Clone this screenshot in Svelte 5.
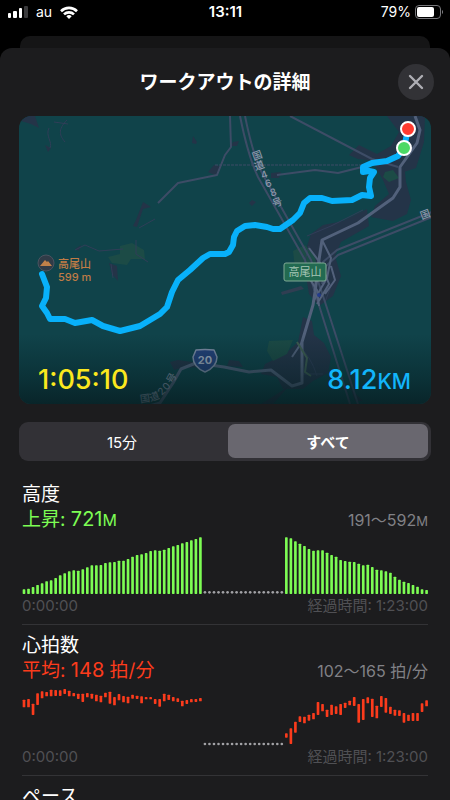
<script>
  let range = $state('all');

  const ranges = [
    { id: '15min', label: '15分' },
    { id: 'all', label: 'すべて' },
  ];

  // chart units: 90 time slots, 1218 x 180
  const STEP = 13.57;
  const slotX = (slot) => 6 + slot * STEP;
  const PAUSE_START = 40;
  const PAUSE_LENGTH = 18;
  const pauseSlots = Array.from({ length: PAUSE_LENGTH }, (_, i) => PAUSE_START + i);

  const climb = [
    178, 176, 171, 165, 160, 154, 151, 144, 136, 130, 124, 121, 122, 118, 112, 106, 106, 105, 99, 97,
    96, 92, 92, 87, 80, 75, 73, 69, 63, 61, 62, 59, 54, 49, 45, 40, 36, 31, 27, 22,
  ];
  const descent = [
    22, 25, 34, 41, 48, 57, 62, 61, 61, 68, 75, 80, 90, 93, 95, 96, 101, 106, 104, 111, 119, 121, 124,
    128, 140, 149, 155, 159, 165, 170, 178, 180,
  ];
  const pulseBefore = [
    [38, 61], [36, 61], [50, 84], [19, 54], [13, 34], [15, 28], [8, 28], [9, 27], [10, 27], [6, 21],
    [11, 28], [18, 28], [20, 36], [20, 45], [18, 31], [20, 35], [23, 43], [26, 46], [17, 31], [14, 50],
    [30, 55], [21, 40], [27, 46], [29, 49], [23, 35], [26, 36], [28, 49], [30, 37], [30, 37], [36, 51],
    [36, 59], [20, 43], [23, 39], [30, 43], [34, 45], [41, 58], [39, 51], [36, 46], [36, 45], [33, 43],
  ];
  const pulseAfter = [
    [139, 152], [124, 171], [104, 137], [88, 105], [89, 109], [83, 101], [78, 97], [45, 84], [51, 73],
    [68, 90], [53, 84], [58, 81], [51, 84], [47, 63], [41, 55], [30, 57], [51, 107], [36, 99], [31, 49],
    [35, 90], [56, 94], [27, 60], [33, 77], [59, 81], [68, 86], [70, 87], [78, 107], [83, 102],
    [78, 102], [78, 102], [49, 75], [40, 58],
  ];

  const place = (before, after) => [
    ...before.map(([top, bottom], i) => ({ x: slotX(i), top, bottom })),
    ...after.map(([top, bottom], i) => ({ x: slotX(PAUSE_START + PAUSE_LENGTH + i), top, bottom })),
  ];
  const fromBase = (tops) => tops.map((top) => [top - 18, 174]);

  // characters of the road names, each with its own centre and tilt
  const roadLetters = [
    ['国', 238, 39, -20], ['道', 240, 49, -20], ['4', 245, 58, -20], ['6', 249, 67, -20],
    ['8', 254, 76, -20], ['号', 258, 86, -20],
    ['国', 406, 98, -20],
    ['国', 126, 282, -8], ['道', 135, 280, -20], ['2', 142, 275, -45], ['0', 147, 270, -50],
    ['号', 152, 262, -60],
  ];

  const sections = [
    {
      id: 'elevation',
      title: '高度',
      label: '上昇:',
      value: '721',
      unit: 'M',
      rate: '',
      extent: '191〜592',
      extentUnit: 'M',
      pauseY: 169,
      bars: place(fromBase(climb), fromBase(descent)),
    },
    {
      id: 'heart',
      title: '心拍数',
      label: '平均:',
      value: '148',
      unit: '',
      rate: ' 拍/分',
      extent: '102〜165 拍/分',
      extentUnit: '',
      pauseY: 171,
      bars: place(pulseBefore, pulseAfter),
    },
  ];
</script>

<div class="screen">
  <header class="status">
    <div class="carrier">
      <svg width="20" height="12" viewBox="0 0 20 12" aria-hidden="true">
        <rect x="0" y="7" width="3" height="5" rx="1" fill="#fff" />
        <rect x="5" y="5" width="4" height="7" rx="1" fill="#fff" />
        <rect x="11" y="2" width="3" height="10" rx="1" fill="#fff" />
        <rect x="16" y="0" width="4" height="12" rx="1" fill="#3a3a3c" />
      </svg>
      <span>au</span>
      <svg width="18" height="13" viewBox="0 0 18 13" aria-hidden="true">
        <g fill="none" stroke="#fff" stroke-width="2.6">
          <path d="M1 5.2a11.4 11.4 0 0 1 16 0" />
          <path d="M4 8.4a7.2 7.2 0 0 1 10 0" />
        </g>
        <path d="M6.3 10.3a4 4 0 0 1 5.4 0L9 13z" fill="#fff" />
      </svg>
    </div>
    <time>13:11</time>
    <div class="battery">
      <span>79%</span>
      <svg width="28" height="14" viewBox="0 0 28 14" aria-hidden="true">
        <rect x="0.5" y="0.5" width="25" height="13" rx="3.5" fill="none" stroke="#77777b" />
        <rect x="2" y="2" width="17" height="10" rx="2" fill="#fff" />
        <path d="M27 5v4a2.4 2.4 0 0 0 0-4" fill="#77777b" />
      </svg>
    </div>
  </header>

  <div class="behind"></div>

  <main class="sheet">
    <div class="titlebar">
      <h1>ワークアウトの詳細</h1>
      <button class="close" aria-label="閉じる">
        <svg width="16" height="16" viewBox="0 0 16 16" aria-hidden="true">
          <path d="M2 2l12 12M14 2L2 14" stroke="#aeaeb4" stroke-width="2.4" stroke-linecap="round" />
        </svg>
      </button>
    </div>

    <div class="map">
      <svg viewBox="0 0 412 288" role="img" aria-label="ルート">
        <defs>
          <linearGradient id="shade" x1="0" y1="0" x2="0" y2="1">
            <stop offset="0" stop-color="#062126" stop-opacity="0" />
            <stop offset="0.5" stop-color="#062126" stop-opacity="0.4" />
            <stop offset="1" stop-color="#061a1e" stop-opacity="0.75" />
          </linearGradient>
        </defs>
        <rect width="412" height="288" fill="#10434a" />

        <g fill="#243448">
          <path d="M2 5L8 0h8l4 12-8-4zM26 29l6 3-3 4zM174 20l4 6-1 2-4-1zM189 56l6-7 6 1-3 10z" />
          <path d="M368 0h38l-1 26-8 26-12 4-10-9-36-4-9-4 10-10 18 9 14-8 8-14z" />
          <path d="M355 48l30-2 2 20 5 18-4 14-14 7-22-4 4-11 14-12-6-14z" />
          <path d="M348 93l-24 12-20 4-12 9-4 12 4 16-6 8 4 24 10 12 14-10 8-20-6-20 6-14 28-16z" />
          <path d="M284 201l9 4 2 14 10 8 7 14-3 16-15 8-10 8-20 0-6-12-16-3 4-10 20-10 13-12z" />
          <path d="M124 86l-7 18-3 6 4 1 6-18 8-2zM56 133l6-4-2 6zM90 147l8 3 1 15-6-7zM252 57l10-1-2 6-8 0zM214 26l6-1-2 5h-6zM233 84l4 2-4 4-3-3z" />
          <path d="M151 246l8-2 14 2 12 5-22 1-8 2zM210 244l10 1 4 6-16-1zM258 278l12-8-16 18h-12zM332 273l12 12h-8z" />
        </g>
        <path d="M262 176l20-6 3 3-22 6z" fill="#303e52" />
        <g fill="#1c4b46">
          <path d="M366 56l8-2 6 8-10 4-6-5zM274 135l12-6 10 11 2 14-22-2z" />
          <path d="M250 225l24-1-6 14-14 7-6-10zM101 130l12-3 12 7 1 9-14 0-4 6-15-2-4-6 12-3z" />
        </g>
        <g fill="none" stroke="#303e58" stroke-width="1">
          <path d="M30 12c-4 8 4 14 1 20M48 4c-10 10-7 16-2 22M56 134l10-5 14 6 24-2M117 124v14l12 8M120 112l16-9M92 148l2 14M35 6l14 2" />
          <path d="M288 120l24-10 32-16M290 130l-5 18 12 14M300 148l12 22-6 16" />
          <path d="M278 228q14 12 20 32M284 258h20" />
        </g>

        <g fill="none" stroke="#3d4c66" stroke-linejoin="round">
          <path d="M196 49h160" stroke-width="1" stroke-dasharray="3 1" />
          <path d="M258 59l38-5 23 3 24-6" stroke-width="2" />
          <path d="M211 0l1 31-6 8-8 20-39 8-20 20" stroke-width="2" />
          <path d="M271 0l82 43 26 8" stroke-width="2" />
          <path d="M221 0q8 40 18 61l47 83 13 42 32 102M226 0q8 40 18 59l48 85 14 42 33 102" stroke-width="2" />
          <path d="M413 96l-95 38-14 12-8 24M413 101l-94 38-12 11-4 18" stroke-width="2" />
        </g>
        <g fill="none" stroke="#52617b" stroke-linejoin="round">
          <path d="M396 0l5 14-3 13-12 17-5 7v20l-7 11-35 25-36 17-3 20-4 32-2 13-11 37v41l-10 3-21-16-22 2-25-5-28-4-15 6-8 14-13 20-14 4H73" stroke-width="3" />
          <path d="M283 226l-10 15M303 124l9 18-4 20-14 24M290 132l12 16 8 20-12 20M286 156l12 18 2 16M312 150l4 14-10 14" stroke-width="2" />
        </g>
        <path d="M278 226l10 16-2 14 6 4" fill="none" stroke="#3e5c50" stroke-width="2" />
        <circle cx="300" cy="179" r="2" fill="#243c8c" />

        {#each roadLetters as [letter, x, y, tilt]}
          <text class="road" transform="translate({x} {y}) rotate({tilt})" y="4">{letter}</text>
        {/each}

        <path
          d="M177 234q9-1 18 0l3 7c0 8-5 12-12 15-7-3-12-7-12-15z"
          fill="#25427d"
          stroke="#8290aa"
          stroke-width="1.5"
          stroke-linejoin="round"
        />
        <text class="shield" x="186" y="248">20</text>
        <rect x="265" y="147" width="42" height="18" rx="2" fill="#226a51" stroke="#80a994" />
        <text class="junction" x="286" y="160">高尾山</text>

        <path
          d="M389 13l-4 19-6 8-11 5-15 2-9 4v5l6-1 5 1-4 6-1 9 2 9-9-1-10 5-20 1-10-3h-12l-6 5-4 10-7 7-13 9h-7l-6-2-12-2-10 1-8 5-3 6-1 8-4 7-4 2h-15l-7 4-13 12-12 10-6 12-5 15-7 7-20 12-20 5-17-5-11-6-17 3-10-4H31l-3-6-5-7 4-8 1-11-5-13"
          fill="none"
          stroke="#08b1fa"
          stroke-width="6"
          stroke-linejoin="round"
          stroke-linecap="round"
        />
        <circle cx="27" cy="147" r="8" fill="#303b47" stroke="#4b5360" />
        <path d="M21 150l5-6 2 2 1-1 4 5z" fill="#c08049" />
        <text class="peak" x="39" y="152">高尾山</text>
        <text class="peak" x="39" y="165">599 m</text>

        <rect y="218" width="412" height="70" fill="url(#shade)" />
        <circle cx="385" cy="32" r="7" fill="#4cd964" stroke="#fff" stroke-width="2" />
        <circle cx="389" cy="13" r="7" fill="#ff3b30" stroke="#fff" stroke-width="2" />
      </svg>
      <div class="totals">
        <span class="duration">1:05:10</span>
        <span class="distance">8.12<span class="unit">KM</span></span>
      </div>
    </div>

    <div class="segmented">
      {#each ranges as item}
        <button
          class:selected={range === item.id}
          aria-pressed={range === item.id}
          onclick={() => (range = item.id)}>{item.label}</button
        >
      {/each}
    </div>

    {#each sections as section}
      <section class={section.id}>
        <h2>{section.title}</h2>
        <div class="figures">
          <span class="summary">
            {section.label}
            <span class="value">{section.value}</span><span class="unit">{section.unit}</span>{section.rate}
          </span>
          <span class="extent">{section.extent}<span class="unit">{section.extentUnit}</span></span>
        </div>
        <svg class="chart" viewBox="0 0 1218 180" role="img" aria-label={section.title}>
          {#each section.bars as bar}
            <rect class="bar" x={bar.x - 4} y={bar.top} width="8" height={bar.bottom - bar.top} rx="2" />
          {/each}
          {#each pauseSlots as slot}
            <circle cx={slotX(slot)} cy={section.pauseY} r="4" fill="#a2a2a6" />
          {/each}
        </svg>
        <div class="axis">
          <span>0:00:00</span>
          <span>経過時間: 1:23:00</span>
        </div>
      </section>
    {/each}

    <section>
      <h2>ペース</h2>
    </section>
  </main>
</div>

<style>
  :global(body) {
    background: #000;
  }

  .screen {
    display: flex;
    flex-direction: column;
    height: 100vh;
    overflow: hidden;
    color: #fff;
    font-family: Inter, 'Noto Sans CJK JP', sans-serif;
  }

  .status {
    display: grid;
    grid-template-columns: 1fr auto 1fr;
    align-items: center;
    flex: none;
    height: 24px;
    margin-bottom: 12px;
    padding: 0 7px 0 8px;
    font-size: 14px;
    line-height: 24px;
  }

  .status time {
    font-size: 15px;
    font-weight: 600;
  }

  .carrier,
  .battery {
    display: flex;
    align-items: center;
  }

  .carrier {
    gap: 8px;
  }

  .battery {
    justify-content: flex-end;
    gap: 4px;
  }

  .behind {
    flex: none;
    height: 12px;
    margin: 0 20px;
    border-radius: 10px 10px 0 0;
    background: #151516;
  }

  .sheet {
    flex: 1;
    min-height: 0;
    overflow: hidden;
    border-radius: 12px 12px 0 0;
    background: #1c1c1e;
  }

  .titlebar {
    display: grid;
    grid-template-columns: 1fr auto 1fr;
    align-items: center;
    height: 68px;
    padding: 0 16px;
  }

  h1 {
    grid-column: 2;
    margin: 0;
    padding-top: 2px;
    font-size: 19px;
    font-weight: 600;
    line-height: 28px;
  }

  button {
    border: 0;
    color: inherit;
    font-family: inherit;
  }

  .close {
    display: flex;
    align-items: center;
    justify-content: center;
    justify-self: end;
    width: 36px;
    height: 36px;
    padding: 0;
    border-radius: 50%;
    background: #323236;
  }

  .map {
    position: relative;
    margin: 0 19px 18px;
    overflow: hidden;
    border-radius: 12px;
  }

  .map svg {
    display: block;
    width: 100%;
  }

  .road {
    fill: #8c98ac;
    font-size: 10px;
    font-weight: 500;
    text-anchor: middle;
  }

  .shield {
    fill: #a9b3c6;
    font-size: 11px;
    font-weight: 700;
    text-anchor: middle;
  }

  .junction {
    fill: #a6c6b5;
    font-size: 11px;
    text-anchor: middle;
  }

  .peak {
    fill: #c07c46;
    font-size: 11px;
    font-weight: 500;
  }

  .totals {
    position: absolute;
    right: 20px;
    bottom: 6px;
    left: 19px;
    display: flex;
    justify-content: space-between;
    font-size: 27px;
    font-weight: 500;
    line-height: 32px;
  }

  .totals .unit {
    font-size: 21px;
  }

  .duration {
    color: #fbe81e;
  }

  .distance {
    color: #12b5fb;
  }

  .segmented {
    display: grid;
    grid-template-columns: 1fr 1fr;
    gap: 6px;
    margin: 0 19px 13px;
    padding: 2px 3px 3px;
    border-radius: 9px;
    background: #323136;
  }

  .segmented button {
    height: 34px;
    padding: 0;
    border-radius: 7px;
    background: transparent;
    font-size: 15px;
    font-weight: 400;
  }

  .segmented .selected {
    background: #69676f;
    font-weight: 700;
  }

  section {
    margin: 0 22px;
    padding: 9px 0 8px;
    border-bottom: 1px solid #333336;
  }

  h2 {
    margin: 0;
    color: #fff;
    font-size: 19px;
    font-weight: 400;
    line-height: 24px;
  }

  .figures {
    display: flex;
    align-items: baseline;
    justify-content: space-between;
    height: 25px;
    margin-bottom: 4px;
    line-height: 25px;
  }

  .summary {
    font-size: 19px;
  }

  .value {
    font-size: 20px;
  }

  .summary .unit {
    font-size: 16px;
  }

  .extent {
    color: #818186;
    font-size: 16px;
  }

  .extent .unit {
    font-size: 13px;
  }

  .elevation {
    color: #7dfd54;
  }

  .heart {
    color: #fb3b1c;
  }

  .chart {
    display: block;
    width: 100%;
  }

  .bar {
    fill: currentColor;
  }

  .axis {
    display: flex;
    justify-content: space-between;
    color: #505054;
    font-size: 15px;
    line-height: 20px;
  }
</style>
